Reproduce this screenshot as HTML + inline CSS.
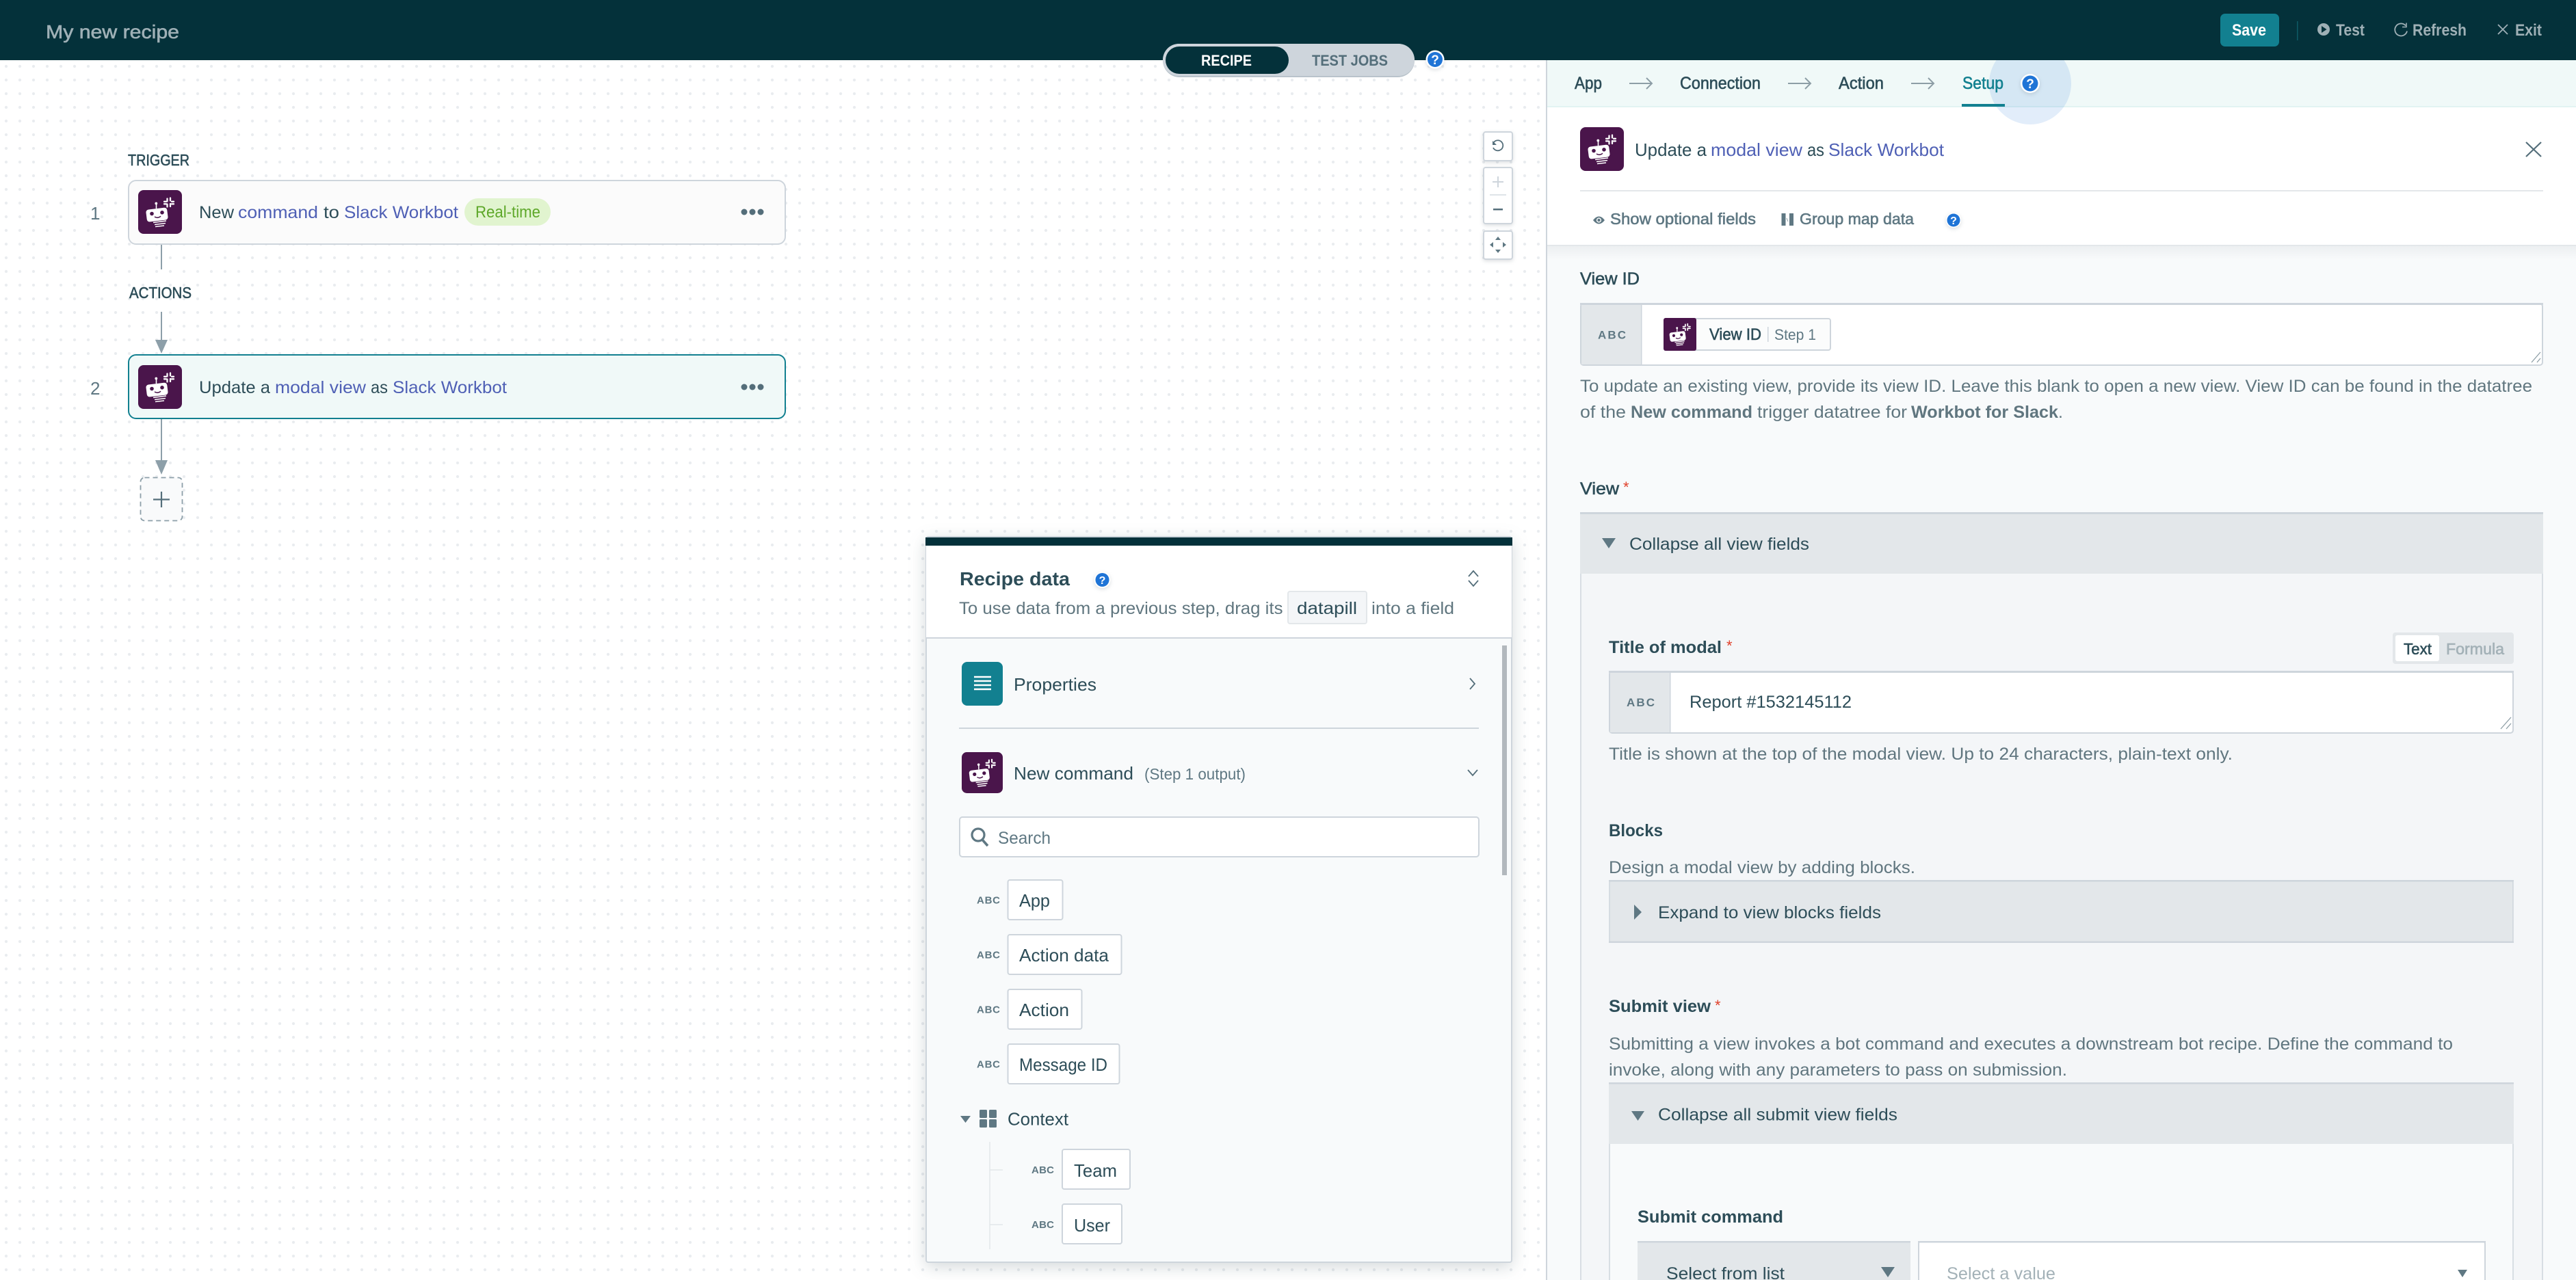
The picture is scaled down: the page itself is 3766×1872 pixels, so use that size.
<!DOCTYPE html>
<html lang="en"><head><meta charset="utf-8"><title>My new recipe</title>
<style>
html,body{margin:0;padding:0;background:#fff;width:3766px;height:1872px;overflow:hidden}
#dots{position:absolute;left:0;top:88px;width:2262px;height:1784px;background-color:#fff;background-image:radial-gradient(circle at 9px 9px,#e9ecef 1.8px,rgba(233,236,239,0) 2.4px);background-size:20px 20px}
svg{position:absolute;left:0;top:0}
text{font-family:"Liberation Sans",sans-serif;font-size:25px;fill:currentColor;color:#2d4d58}
.s{stroke:currentColor;stroke-width:.6}
.B{font-weight:bold}
.l{color:#4f60b5}
.g{color:#5f7883}
.h{color:#60767f}
.t{color:#128090}
.w{color:#fff}
.q{font-weight:bold;font-size:19px;color:#fff;text-anchor:middle}
.a{font-weight:bold;font-size:17px;color:#5f7883}
.a2{font-weight:bold;font-size:15px;color:#5f7883}
.n{color:#a3b1b7}
.hd{color:#9fb0b6}
.f{fill:#fff;stroke:#ced5dc;stroke-width:2}
.sh{filter:drop-shadow(0 2px 3px rgba(60,80,90,.18))}
</style></head>
<body>
<div id="dots"></div>
<svg width="3766" height="1872" viewBox="0 0 3766 1872" xmlns="http://www.w3.org/2000/svg">
<defs>
<symbol id="bot" viewBox="0 0 64 64">
<rect width="64" height="64" rx="8" fill="#4a154b"/>
<g transform="rotate(-7 28 36)"><rect x="12" y="27" width="31" height="18" rx="4" fill="#fff"/></g>
<circle cx="20" cy="34.5" r="2.8" fill="#4a154b"/><circle cx="35" cy="32.8" r="2.8" fill="#4a154b"/>
<path d="M24 39q4.500 3 9-.8" fill="none" stroke="#4a154b" stroke-width="1.600"/>
<path d="M22 47.500l19-2.500M24 50.500l16-2M25 53.500l13-1.500" stroke="#fff" stroke-width="1.600" fill="none"/>
<path d="M26.500 27v-6" stroke="#fff" stroke-width="1.600"/><circle cx="26.300" cy="19.500" r="1.900" fill="#fff"/>
<g stroke="#fff" stroke-width="2.300" stroke-linecap="round" fill="none"><path d="M42.500 12.500v4M47 11.500v4M42.500 20.500v4M47 20v4M38 16.800h3M49 16.800h3M38 20.300h3M49 20.300h3"/></g>
</symbol>
</defs>

<!-- right panel -->
<rect x="2260" y="88" width="2" height="1784" fill="#ced5dc"/>
<rect x="2262" y="88" width="1504" height="69" fill="#f0f9f8"/>
<rect x="2262" y="155" width="1504" height="2" fill="#e2f3f2"/>
<rect x="2262" y="157" width="1504" height="203" fill="#fff"/>
<rect x="2262" y="360" width="1504" height="1512" fill="#f8fafb"/>
<rect x="2262" y="358" width="1504" height="2" fill="#e3e7ea"/>
<linearGradient id="gs" x1="0" y1="0" x2="0" y2="1"><stop offset="0" stop-color="#eceff1"/><stop offset="1" stop-color="#f8fafb"/></linearGradient>
<rect x="2262" y="360" width="1504" height="20" fill="url(#gs)"/>
<circle cx="2968" cy="122" r="60" fill="#1f74d6" opacity=".13"/>

<!-- header -->
<rect x="0" y="0" width="3766" height="88" fill="#04313a"/>
<text x="67" y="56" style="font-size:28px" class="s hd" textLength="195" lengthAdjust="spacingAndGlyphs">My new recipe</text>
<rect x="3246" y="20" width="86" height="48" rx="7" fill="#128090"/>
<text x="3263" y="52" style="font-size:24px" class="B w" textLength="50" lengthAdjust="spacingAndGlyphs">Save</text>
<rect x="3358" y="31" width="1.500" height="28" fill="#0e5a66"/>
<circle cx="3397" cy="43" r="9" fill="#9fb0b6"/><path d="M3394 38l7.500 5-7.500 5z" fill="#04313a"/>
<text x="3415" y="52" style="font-size:24px" class="B hd" textLength="42" lengthAdjust="spacingAndGlyphs">Test</text>
<path d="M3517 37.500a9 9 0 1 0 2 8" fill="none" stroke="#9fb0b6" stroke-width="1.800"/><path d="M3518 33.500v6h-6" fill="none" stroke="#9fb0b6" stroke-width="1.600"/>
<text x="3527" y="52" style="font-size:24px" class="B hd" textLength="79" lengthAdjust="spacingAndGlyphs">Refresh</text>
<path d="M3652 36l14 14M3666 36l-14 14" stroke="#9fb0b6" stroke-width="1.800"/>
<text x="3677" y="52" style="font-size:24px" class="B hd" textLength="39" lengthAdjust="spacingAndGlyphs">Exit</text>

<!-- steps -->
<text x="2302" y="130" class="s" textLength="40" lengthAdjust="spacingAndGlyphs">App</text>
<path d="M2382 122h33M2407 114l8 8-8 8" fill="none" stroke="#8d9ea6" stroke-width="2"/>
<text x="2456" y="130" class="s" textLength="118" lengthAdjust="spacingAndGlyphs">Connection</text>
<path d="M2614 122h33M2639 114l8 8-8 8" fill="none" stroke="#8d9ea6" stroke-width="2"/>
<text x="2688" y="130" class="s" textLength="66" lengthAdjust="spacingAndGlyphs">Action</text>
<path d="M2794 122h33M2819 114l8 8-8 8" fill="none" stroke="#8d9ea6" stroke-width="2"/>
<text x="2869" y="130" class="s t" textLength="60" lengthAdjust="spacingAndGlyphs">Setup</text>
<rect x="2868" y="152" width="63" height="4" fill="#128090"/>
<circle cx="2968" cy="122" r="14" fill="#fff" class="sh"/><circle cx="2968" cy="122" r="11.500" fill="#1f74d6"/><text x="2968" y="129" class="q">?</text>

<!-- step header -->
<use href="#bot" x="2310" y="186" width="64" height="64"/>
<text x="2390" y="228" style="font-size:26px" textLength="105" lengthAdjust="spacingAndGlyphs">Update a</text>
<text x="2501" y="228" style="font-size:26px" class="l" textLength="134" lengthAdjust="spacingAndGlyphs">modal view</text>
<text x="2642" y="228" style="font-size:26px" textLength="25" lengthAdjust="spacingAndGlyphs">as</text>
<text x="2673" y="228" style="font-size:26px" class="l" textLength="169" lengthAdjust="spacingAndGlyphs">Slack Workbot</text>
<path d="M3693 208l22 21M3715 208l-22 21" stroke="#546e7a" stroke-width="2.200"/>
<rect x="2310" y="278" width="1408" height="2" fill="#e4e7ea"/>
<path d="M2329 322q8.500-11 17 0q-8.500 11-17 0z" fill="#5f7883"/><circle cx="2337.500" cy="322" r="3.600" fill="#fff"/><circle cx="2337.500" cy="322" r="2.200" fill="#5f7883"/>
<text x="2354" y="328" style="font-size:23px" class="s g" textLength="213" lengthAdjust="spacingAndGlyphs">Show optional fields</text>
<rect x="2604.500" y="312" width="6" height="18" fill="#5f7883"/><rect x="2616" y="312" width="6" height="18" fill="#5f7883"/><path d="M2612 319l2 5" stroke="#8d9ea6" stroke-width="1"/>
<text x="2631" y="328" style="font-size:23px" class="s g" textLength="167" lengthAdjust="spacingAndGlyphs">Group map data</text>
<circle cx="2856" cy="322" r="11" fill="#fff" class="sh"/><circle cx="2856" cy="322" r="9.500" fill="#1f74d6"/><text x="2856" y="328" class="q" style="font-size:16px">?</text>

<!-- View ID -->
<text x="2310" y="416" class="s" textLength="87" lengthAdjust="spacingAndGlyphs">View ID</text>
<rect x="2311" y="444" width="1406" height="90" rx="4" class="f"/>
<rect x="2310" y="443" width="1408" height="3" fill="#ced5dc"/>
<rect x="2312" y="446" width="87" height="87" fill="#e3e7ea"/>
<rect x="2399" y="446" width="1.500" height="87" fill="#ced5dc"/>
<text x="2336" y="495.500" class="a" textLength="41">ABC</text>
<rect x="2433" y="466" width="243" height="46" rx="3" fill="#fbfcfc" stroke="#ced5dc" stroke-width="2"/>
<rect x="2432" y="465" width="48" height="48" rx="3" fill="#4a154b"/>
<use href="#bot" x="2432" y="465" width="48" height="48"/>
<text x="2499" y="497" style="font-size:24px" class="s" textLength="76" lengthAdjust="spacingAndGlyphs">View ID</text>
<rect x="2584" y="478" width="1.500" height="22" fill="#ced5dc"/>
<text x="2594" y="497" style="font-size:22px" class="g" textLength="61" lengthAdjust="spacingAndGlyphs">Step 1</text>
<path d="M3701 530l13-15M3709 530l5-6" stroke="#8d9ea6" stroke-width="1.300"/>
<text x="2310" y="573" class="h" textLength="1392" lengthAdjust="spacingAndGlyphs">To update an existing view, provide its view ID. Leave this blank to open a new view. View ID can be found in the datatree</text>
<text x="2310" y="611" class="h" textLength="67" lengthAdjust="spacingAndGlyphs">of the</text>
<text x="2384" y="611" class="B h" textLength="178" lengthAdjust="spacingAndGlyphs">New command</text>
<text x="2569" y="611" class="h" textLength="219" lengthAdjust="spacingAndGlyphs">trigger datatree for</text>
<text x="2794" y="611" class="B h" textLength="215" lengthAdjust="spacingAndGlyphs">Workbot for Slack</text>
<text x="3009" y="611" class="h">.</text>

<!-- View -->
<text x="2310" y="723" class="s" textLength="57" lengthAdjust="spacingAndGlyphs">View</text>
<text x="2373" y="720" style="font-size:22px;color:#e0402a">*</text>
<rect x="2311" y="750" width="1406" height="1140" fill="#f4f6f8" stroke="#ced5dc" stroke-width="1.500"/>
<rect x="2310" y="749" width="1408" height="90" fill="#e3e7ea"/>
<rect x="2310" y="749" width="1408" height="3" fill="#ced5dc"/>
<path d="M2342 787h20l-10 15z" fill="#5f7883"/>
<text x="2382" y="804" textLength="263" lengthAdjust="spacingAndGlyphs">Collapse all view fields</text>

<text x="2352" y="955" class="B" textLength="165" lengthAdjust="spacingAndGlyphs">Title of modal</text>
<text x="2524" y="952" style="font-size:22px;color:#e0402a">*</text>
<rect x="3498" y="925" width="177" height="46" rx="4" fill="#e3e7ea"/>
<rect x="3502" y="929" width="64" height="38" rx="3" fill="#fff"/>
<text x="3514" y="957" style="font-size:23px" class="s" textLength="41" lengthAdjust="spacingAndGlyphs">Text</text>
<text x="3576" y="957" style="font-size:23px" class="s n" textLength="85" lengthAdjust="spacingAndGlyphs">Formula</text>
<rect x="2353" y="982" width="1321" height="90" rx="4" class="f"/>
<rect x="2352" y="981" width="1323" height="3" fill="#ced5dc"/>
<rect x="2354" y="984" width="87" height="87" fill="#e3e7ea"/>
<rect x="2441" y="984" width="1.500" height="87" fill="#ced5dc"/>
<text x="2378" y="1033" class="a" textLength="41">ABC</text>
<text x="2470" y="1035" textLength="237" lengthAdjust="spacingAndGlyphs">Report #1532145112</text>
<path d="M3656 1066l15-17M3664 1066l7-8" stroke="#8d9ea6" stroke-width="1.300"/>
<text x="2352" y="1111" class="h" textLength="912" lengthAdjust="spacingAndGlyphs">Title is shown at the top of the modal view. Up to 24 characters, plain-text only.</text>

<text x="2352" y="1223" class="B" textLength="79" lengthAdjust="spacingAndGlyphs">Blocks</text>
<text x="2352" y="1277" class="h" textLength="448" lengthAdjust="spacingAndGlyphs">Design a modal view by adding blocks.</text>
<rect x="2353" y="1288" width="1321" height="90" rx="3" fill="#e3e7ea" stroke="#ced5dc" stroke-width="1.500"/>
<rect x="2352" y="1287" width="1323" height="2.500" fill="#ced5dc"/>
<rect x="2352" y="1376.500" width="1323" height="2.500" fill="#ced5dc"/>
<path d="M2389 1323l11 11-11 11z" fill="#5f7883"/>
<text x="2424" y="1343" textLength="326" lengthAdjust="spacingAndGlyphs">Expand to view blocks fields</text>

<text x="2352" y="1480" class="B" textLength="149" lengthAdjust="spacingAndGlyphs">Submit view</text>
<text x="2507" y="1478" style="font-size:22px;color:#e0402a">*</text>
<text x="2352" y="1535" class="h" textLength="1234" lengthAdjust="spacingAndGlyphs">Submitting a view invokes a bot command and executes a downstream bot recipe. Define the command to</text>
<text x="2352" y="1573" class="h" textLength="670" lengthAdjust="spacingAndGlyphs">invoke, along with any parameters to pass on submission.</text>
<rect x="2353" y="1584" width="1321" height="300" fill="#f8fafb" stroke="#ced5dc" stroke-width="1.500"/>
<rect x="2352" y="1583" width="1323" height="90" fill="#e3e7ea"/>
<rect x="2352" y="1583" width="1323" height="2.500" fill="#ced5dc"/>
<path d="M2385 1625h19l-9.500 14z" fill="#5f7883"/>
<text x="2424" y="1638.500" textLength="350" lengthAdjust="spacingAndGlyphs">Collapse all submit view fields</text>
<text x="2394" y="1788" class="B" textLength="213" lengthAdjust="spacingAndGlyphs">Submit command</text>
<rect x="2394" y="1815" width="399" height="70" rx="3" fill="#e3e7ea"/>
<rect x="2394" y="1815" width="399" height="2.500" fill="#ced5dc"/>
<text x="2436" y="1871" textLength="173" lengthAdjust="spacingAndGlyphs">Select from list</text>
<path d="M2750 1853h20l-10 15z" fill="#5f7883"/>
<rect x="2805" y="1816" width="828" height="70" rx="3" class="f"/>
<rect x="2804" y="1815" width="830" height="2.500" fill="#ced5dc"/>
<text x="2846" y="1871" class="n" textLength="159" lengthAdjust="spacingAndGlyphs">Select a value</text>
<path d="M3593 1857h14l-7 11z" fill="#5f7883"/>

<!-- left: workflow -->
<text x="187" y="242" style="font-size:23px" class="s" textLength="90" lengthAdjust="spacingAndGlyphs">TRIGGER</text>
<text x="132" y="321" style="font-size:26px" class="g">1</text>
<rect x="188" y="264" width="960" height="93" rx="11" fill="#fbfbfb" stroke="#ced5dc" stroke-width="2"/>
<use href="#bot" x="202" y="278" width="64" height="64"/>
<text x="291" y="319" textLength="51" lengthAdjust="spacingAndGlyphs">New</text>
<text x="348" y="319" class="l" textLength="117" lengthAdjust="spacingAndGlyphs">command</text>
<text x="473" y="319" textLength="23" lengthAdjust="spacingAndGlyphs">to</text>
<text x="503" y="319" class="l" textLength="167" lengthAdjust="spacingAndGlyphs">Slack Workbot</text>
<rect x="679" y="290" width="126" height="40" rx="20" fill="#e1f4cf"/>
<text x="695" y="318" style="font-size:24px;color:#5ea82a" textLength="95" lengthAdjust="spacingAndGlyphs">Real-time</text>
<circle cx="1088" cy="310" r="4.500" fill="#546e7a"/><circle cx="1100" cy="310" r="4.500" fill="#546e7a"/><circle cx="1112" cy="310" r="4.500" fill="#546e7a"/>
<rect x="235" y="358" width="2" height="36" fill="#8d9fa9"/>
<text x="189" y="436" style="font-size:23px" class="s" textLength="91" lengthAdjust="spacingAndGlyphs">ACTIONS</text>
<rect x="235" y="456" width="2" height="42" fill="#8d9fa9"/>
<path d="M227 497h18l-9 20z" fill="#8d9fa9"/>
<text x="132" y="577" style="font-size:26px" class="g">2</text>
<rect x="188" y="519" width="960" height="93" rx="11" fill="#f0f9f8" stroke="#128090" stroke-width="2"/>
<use href="#bot" x="202" y="534" width="64" height="64"/>
<text x="291" y="575" textLength="104" lengthAdjust="spacingAndGlyphs">Update a</text>
<text x="402" y="575" class="l" textLength="133" lengthAdjust="spacingAndGlyphs">modal view</text>
<text x="542" y="575" textLength="25" lengthAdjust="spacingAndGlyphs">as</text>
<text x="574" y="575" class="l" textLength="167" lengthAdjust="spacingAndGlyphs">Slack Workbot</text>
<circle cx="1088" cy="566" r="4.500" fill="#546e7a"/><circle cx="1100" cy="566" r="4.500" fill="#546e7a"/><circle cx="1112" cy="566" r="4.500" fill="#546e7a"/>
<rect x="235" y="613" width="2" height="61" fill="#8d9fa9"/>
<path d="M227 673h18l-9 21z" fill="#8d9fa9"/>
<rect x="205.500" y="698.500" width="61" height="63" rx="6" fill="#f9fafb" stroke="#8d9fa9" stroke-width="1.800" stroke-dasharray="7 5"/>
<path d="M236 719v23M224 730.500h24" stroke="#546e7a" stroke-width="2.200"/>

<!-- toggle -->
<rect x="1700" y="64" width="368" height="49" rx="24.500" fill="#b9c3cb"/>
<rect x="1700" y="64" width="368" height="47" rx="23.500" fill="#ced5dc"/>
<rect x="1704" y="68" width="180" height="40" rx="20" fill="#04313a"/>
<text x="1756" y="96" style="font-size:22px" class="B w" textLength="74" lengthAdjust="spacingAndGlyphs">RECIPE</text>
<text x="1918" y="96" style="font-size:22px;color:#546e7a" class="B" textLength="111" lengthAdjust="spacingAndGlyphs">TEST JOBS</text>
<circle cx="2098" cy="87" r="13.500" fill="#fff" class="sh"/><circle cx="2098" cy="87" r="11" fill="#1f74d6"/><text x="2098" y="94" class="q">?</text>

<!-- zoom controls -->
<g class="sh">
<rect x="2169" y="193" width="42" height="42" rx="3" fill="#fff" stroke="#ced5dc" stroke-width="2"/>
<rect x="2169" y="245" width="42" height="82" rx="3" fill="#fff" stroke="#ced5dc" stroke-width="2"/>
<rect x="2169" y="338" width="42" height="41" rx="3" fill="#fff" stroke="#ced5dc" stroke-width="2"/>
</g>
<path d="M2184 208a7.500 7.500 0 1 1-1 8" fill="none" stroke="#546e7a" stroke-width="1.800"/><path d="M2182 206v6h6z" fill="#546e7a"/>
<path d="M2190 258v16M2182 266h16" stroke="#ced5dc" stroke-width="2"/>
<rect x="2178" y="284" width="24" height="2" fill="#dfe4e8"/>
<rect x="2183" y="305" width="14" height="2.500" fill="#546e7a"/>
<path d="M2190 346l4 5h-8zM2190 370l4-5h-8zM2178 358l5-4v8zM2202 358l-5-4v8z" fill="#5f7883"/>

<!-- recipe data panel -->
<rect x="1354" y="785" width="856" height="1061" rx="3" fill="#f8fafb" stroke="#ced5dc" stroke-width="2" style="filter:drop-shadow(0 6px 12px rgba(60,80,90,.22))"/>
<rect x="1354" y="797" width="856" height="136" fill="#fff"/>
<rect x="1353" y="786" width="858" height="12" fill="#04313a"/>
<rect x="1353" y="932" width="858" height="2" fill="#ced5dc"/>
<text x="1403" y="856" style="font-size:28px" class="B" textLength="161" lengthAdjust="spacingAndGlyphs">Recipe data</text>
<circle cx="1611.500" cy="848" r="12" fill="#fff" class="sh"/><circle cx="1611.500" cy="848" r="10" fill="#1f74d6"/><text x="1611.500" y="854" class="q" style="font-size:16px">?</text>
<path d="M2147 843l7-8 7 8M2147 849l7 8 7-8" fill="none" stroke="#546e7a" stroke-width="1.800"/>
<text x="1402" y="898" class="h" textLength="473.500" lengthAdjust="spacingAndGlyphs">To use data from a previous step, drag its</text>
<rect x="1883" y="865" width="115" height="47" rx="3" fill="#f4f6f8" stroke="#e3e7ea" stroke-width="2"/>
<text x="1896" y="898" textLength="88" lengthAdjust="spacingAndGlyphs">datapill</text>
<text x="2005" y="898" class="h" textLength="121" lengthAdjust="spacingAndGlyphs">into a field</text>
<rect x="2196" y="944" width="7" height="336" fill="#b2b8bd"/>
<rect x="1406" y="968" width="60" height="64" rx="8" fill="#128090"/>
<path d="M1424 990h25M1424 996h25M1424 1002h25M1424 1008h25" stroke="#fff" stroke-width="2.600"/>
<text x="1482" y="1010" style="font-size:26px" textLength="121" lengthAdjust="spacingAndGlyphs">Properties</text>
<path d="M2149 992l7 8-7 8" fill="none" stroke="#546e7a" stroke-width="1.800"/>
<rect x="1402" y="1064" width="760" height="2" fill="#ced5dc"/>
<use href="#bot" x="1406" y="1098" width="60" height="64" preserveAspectRatio="none"/>
<text x="1482" y="1140" style="font-size:26px" textLength="175" lengthAdjust="spacingAndGlyphs">New command</text>
<text x="1673" y="1140" style="font-size:23px" class="g" textLength="148" lengthAdjust="spacingAndGlyphs">(Step 1 output)</text>
<path d="M2146 1126l7 8 7-8" fill="none" stroke="#546e7a" stroke-width="1.800"/>
<rect x="1403" y="1195" width="759" height="58" rx="4" class="f"/>
<circle cx="1430" cy="1221" r="9" fill="none" stroke="#5f7883" stroke-width="3.200"/><path d="M1436 1228l8 9" stroke="#5f7883" stroke-width="3.600"/>
<text x="1459" y="1234" class="g" textLength="77" lengthAdjust="spacingAndGlyphs">Search</text>

<text x="1428" y="1321.500" class="a2" textLength="34">ABC</text>
<rect x="1473.500" y="1287" width="80" height="58" rx="3" class="f"/>
<text x="1490" y="1326" style="font-size:26px" textLength="45" lengthAdjust="spacingAndGlyphs">App</text>
<text x="1428" y="1401.500" class="a2" textLength="34">ABC</text>
<rect x="1473.500" y="1367" width="166" height="58" rx="3" class="f"/>
<text x="1490" y="1406" style="font-size:26px" textLength="131" lengthAdjust="spacingAndGlyphs">Action data</text>
<text x="1428" y="1481.500" class="a2" textLength="34">ABC</text>
<rect x="1473.500" y="1447" width="108" height="58" rx="3" class="f"/>
<text x="1490" y="1486" style="font-size:26px" textLength="73" lengthAdjust="spacingAndGlyphs">Action</text>
<text x="1428" y="1561.500" class="a2" textLength="34">ABC</text>
<rect x="1473.500" y="1527" width="163" height="58" rx="3" class="f"/>
<text x="1490" y="1566" style="font-size:26px" textLength="129" lengthAdjust="spacingAndGlyphs">Message ID</text>
<path d="M1404 1632h15l-7.500 10z" fill="#5f7883"/>
<rect x="1432" y="1623" width="11" height="12" rx="1.500" fill="#5f7883"/><rect x="1446" y="1623" width="11" height="12" rx="1.500" fill="#5f7883"/><rect x="1432" y="1637" width="11" height="12" rx="1.500" fill="#5f7883"/><rect x="1446" y="1637" width="11" height="12" rx="1.500" fill="#5f7883"/>
<text x="1473" y="1645.500" style="font-size:26px" textLength="89" lengthAdjust="spacingAndGlyphs">Context</text>
<path d="M1447 1670v157M1447 1711h19M1447 1791h19" stroke="#e3e7ea" stroke-width="1.500" fill="none"/>
<text x="1508" y="1716" class="a2" textLength="33">ABC</text>
<rect x="1553" y="1681" width="99" height="58" rx="3" class="f"/>
<text x="1570" y="1721" style="font-size:26px" textLength="63" lengthAdjust="spacingAndGlyphs">Team</text>
<text x="1508" y="1796" class="a2" textLength="33">ABC</text>
<rect x="1553" y="1761" width="87" height="58" rx="3" class="f"/>
<text x="1570" y="1801" style="font-size:26px" textLength="53" lengthAdjust="spacingAndGlyphs">User</text>
</svg>
</body></html>
